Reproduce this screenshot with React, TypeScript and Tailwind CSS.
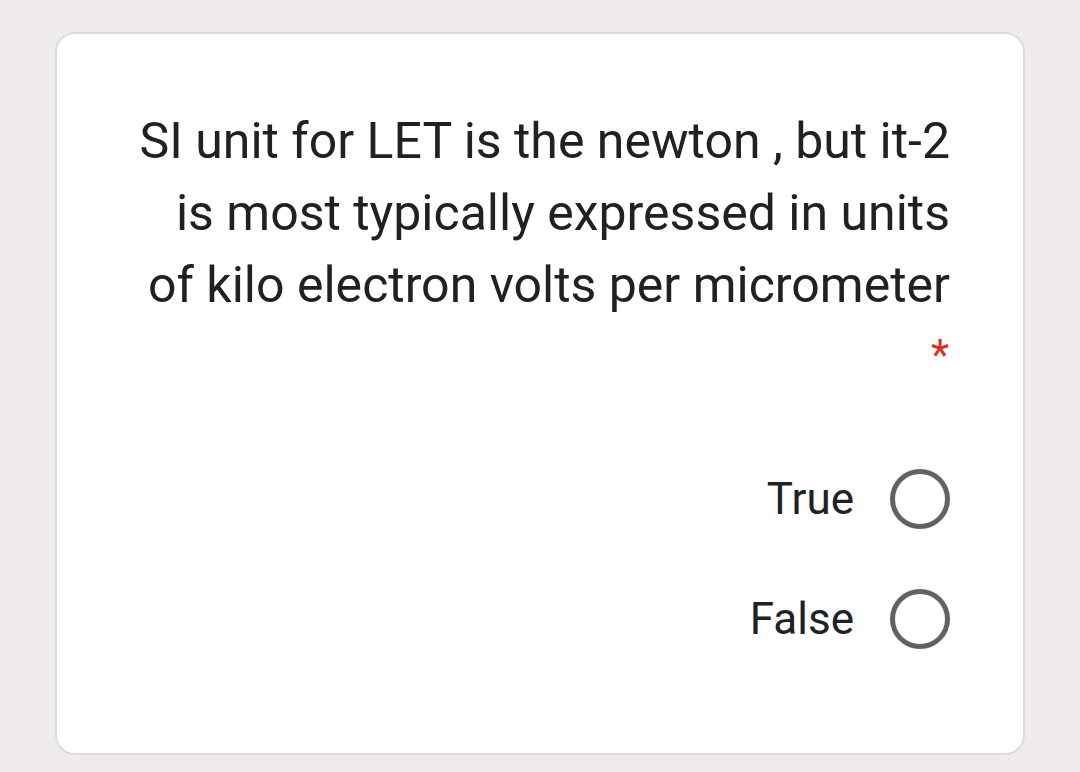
import React from "react";

function Radio() {
  return (
    <div className="w-[60px] h-[60px] rounded-full border-[5px] border-[#5f6368] bg-white" />
  );
}

export default function App() {
  return (
    <div className="w-[1080px] h-[772px] bg-[#efebea] pt-[32px] pl-[55px]" style={{ fontFamily: "Roboto, 'Noto Sans', sans-serif" }}>
      <div className="w-[970px] h-[723px] bg-white border-2 border-[#dadce0] rounded-[20px] pr-[73px] pt-[71px] flex flex-col items-end">
        <div className="text-right text-[50px] leading-[72px] text-[#202124]">
          <div>SI unit for LET is the newton , but it-2</div>
          <div>is most typically expressed in units</div>
          <div>of kilo electron volts per micrometer</div>
        </div>
        <div className="text-[#d93025] text-[42px] leading-none mt-[13px] mr-[1px]">*</div>
        <div className="mt-[90px] flex items-center gap-[36px]">
          <span className="text-[44px] text-[#202124]">True</span>
          <Radio />
        </div>
        <div className="mt-[54px] flex items-center gap-[36px]">
          <span className="text-[44px] text-[#202124]">False</span>
          <Radio />
        </div>
      </div>
    </div>
  );
}
